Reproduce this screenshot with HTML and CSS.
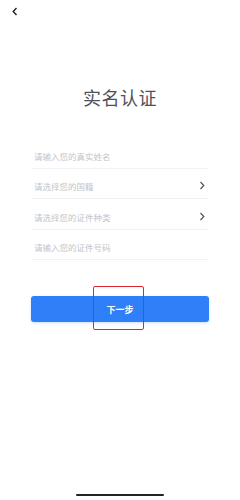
FILE: index.html
```html
<!DOCTYPE html>
<html lang="zh">
<head>
  <meta charset="UTF-8" />
  <meta name="viewport" content="width=device-width, initial-scale=1.0"/>
  <title>实名认证</title>
  <link rel="stylesheet" href="styles.css">
</head>
<body>
  <div class="page">
    <header class="topbar">
      <svg class="back" width="6" height="9" viewBox="0 0 6 9">
        <polyline points="4.5,1 1.2,4.5 4.5,8" fill="none" stroke="#222" stroke-width="1.4"/>
      </svg>
    </header>

    <h1 class="title">实名认证</h1>

    <div class="form">
      <div class="row"><span class="hint">请输入您的真实姓名</span></div>
      <div class="row">
        <span class="hint">请选择您的国籍</span>
        <svg class="arrow" width="6" height="9" viewBox="0 0 6 9">
          <polyline points="1.5,1 4.8,4.5 1.5,8" fill="none" stroke="#555" stroke-width="1.2"/>
        </svg>
      </div>
      <div class="row">
        <span class="hint">请选择您的证件种类</span>
        <svg class="arrow" width="6" height="9" viewBox="0 0 6 9">
          <polyline points="1.5,1 4.8,4.5 1.5,8" fill="none" stroke="#555" stroke-width="1.2"/>
        </svg>
      </div>
      <div class="row"><span class="hint">请输入您的证件号码</span></div>
    </div>

    <div class="btn-wrap">
      <button class="next-btn">下一步</button>
      <div class="mark"></div>
    </div>

    <div class="home-bar"></div>
  </div>
</body>
</html>
```

FILE: styles.css
```css
body {
  margin: 0;
  background: #fff;
  font-family: "Noto Sans CJK SC", "Noto Sans", sans-serif;
}

.page {
  width: 240px;
  height: 500px;
  display: flex;
  flex-direction: column;
}

.topbar {
  height: 22px;
  padding-left: 12px;
  display: flex;
  align-items: center;
}

.back {
  display: block;
}

.title {
  margin: 63px 0 0;
  height: 24px;
  line-height: 24px;
  text-align: center;
  font-size: 18px;
  font-weight: normal;
  color: #4e515d;
  letter-spacing: 0.5px;
}

.form {
  margin: 29px 32px 0 32px;
}

.row {
  height: 30.5px;
  box-sizing: border-box;
  border-bottom: 1px solid #f1f2f4;
  display: flex;
  align-items: flex-end;
  justify-content: space-between;
  padding: 0 2px 6px 2px;
}

.hint {
  font-size: 8.5px;
  line-height: 12px;
  color: #c3c5cb;
}

.arrow {
  display: block;
  margin-bottom: 2px;
  margin-right: 1px;
}

.btn-wrap {
  position: relative;
  margin: 36px 31px 0 31px;
}

.next-btn {
  display: block;
  width: 100%;
  height: 26px;
  border: none;
  border-radius: 3px;
  background: #2f7ff9;
  color: #fff;
  font-family: inherit;
  font-size: 9px;
  font-weight: bold;
  box-shadow: 0 1px 3px rgba(47, 127, 249, 0.25);
}

.mark {
  position: absolute;
  left: 62px;
  top: -10px;
  width: 51px;
  height: 44px;
  border: 1px solid #e0262c;
  border-radius: 2px;
  box-sizing: border-box;
}

.home-bar {
  margin: auto auto 4px;
  width: 88px;
  height: 2px;
  border-radius: 1px;
  background: #222;
}
```
